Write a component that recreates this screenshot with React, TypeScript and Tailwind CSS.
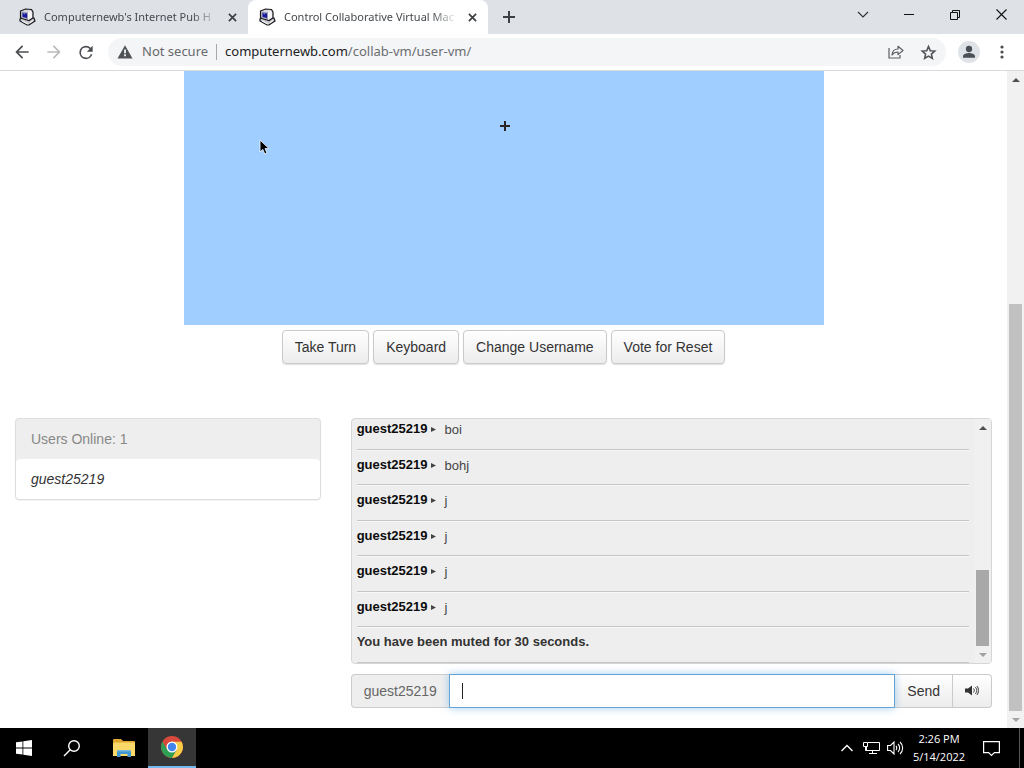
import React from "react";

function PcIcon() {
  return (
    <svg width="18" height="18" viewBox="0 0 18 18" className="shrink-0" aria-hidden="true">
      <path d="M2 11l3-2 11 1 1 3-6 4-2 0-7-4z" fill="#c9c9d0" stroke="#18181c" strokeWidth="1.200" />
      <path d="M4 13l6 3M12 15l3-2.500" stroke="#fff" strokeWidth="1" />
      <path d="M2.500 3l5-2 6 .5 1.500 2.500v6l-4 2.500-7-2-1.500-1z" fill="#d8d8df" stroke="#18181c" strokeWidth="1.200" />
      <path d="M10 4l3-1 1 3v3l-4 3z" fill="#f5f5f8" />
      <path d="M3.500 3.500l6.500 1v7l-6.500-2z" fill="#9a9cab" />
      <path d="M4.500 4.800l4.500.8v4.400l-4.500-1.200z" fill="#17179a" />
      <path d="M5.500 5.600l1.500.3" stroke="#8f9fff" />
    </svg>
  );
}

function Tab({ title, active }: { title: string; active?: boolean }) {
  return (
    <div
      className={
        active
          ? "flex w-60 items-center rounded-t-lg bg-white pr-2 pl-2.5 text-[#45494d]"
          : "flex w-60 items-center pr-2 pl-2.5 text-[#45494d]"
      }
    >
      <PcIcon />
      <span className="ml-2 min-w-0 flex-1 overflow-hidden [mask-image:linear-gradient(to_right,black_85%,transparent)] font-['Noto_Sans',sans-serif] text-[11px] whitespace-nowrap">
        {title}
      </span>
      <button type="button" aria-label="Close tab" className="ml-1.5 flex size-4 items-center justify-center">
        <svg width="9" height="9" viewBox="0 0 10 10" stroke="#3c4043" strokeWidth="1.900">
          <path d="M1 1l8 8M9 1L1 9" />
        </svg>
      </button>
    </div>
  );
}

function TabStrip() {
  return (
    <header className="flex h-[34px] shrink-0 bg-[#dee1e6] pl-2">
      <div className="flex min-w-0">
        <Tab title="Computernewb's Internet Pub H" />
        <Tab title="Control Collaborative Virtual Mac" active />
      </div>
      <button type="button" aria-label="New tab" className="ml-[11px] flex w-5 items-center justify-center">
        <svg width="12" height="12" viewBox="0 0 12 12" stroke="#3c4043" strokeWidth="2">
          <path d="M6 0v12M0 6h12" />
        </svg>
      </button>
      <div className="ml-auto flex h-[29px]">
        <button type="button" aria-label="Search tabs" className="flex w-[46px] items-center justify-center">
          <svg width="12" height="12" viewBox="0 0 12 12" fill="none" stroke="#333" strokeWidth="1.200">
            <path d="M1 3l5 5 5-5" />
          </svg>
        </button>
        <button type="button" aria-label="Minimize" className="flex w-[46px] items-center justify-center">
          <svg width="10" height="10" viewBox="0 0 10 10" stroke="#111">
            <path d="M0 4.500h10" />
          </svg>
        </button>
        <button type="button" aria-label="Restore" className="flex w-[46px] items-center justify-center">
          <svg width="10" height="10" viewBox="0 0 10 10" fill="none" stroke="#111">
            <path d="M.5 2.500h7v7h-7zM2.500 2.500v-2h7v7h-2" />
          </svg>
        </button>
        <button type="button" aria-label="Close" className="flex w-[46px] items-center justify-center">
          <svg width="11" height="11" viewBox="0 0 11 11" stroke="#111" strokeWidth="1.100">
            <path d="M.5.500l10 10M10.500.500l-10 10" />
          </svg>
        </button>
      </div>
    </header>
  );
}

function Toolbar() {
  return (
    <div className="flex h-[37px] shrink-0 items-center border-b border-[#d8dadd] bg-white pr-3 pl-3">
      <button type="button" aria-label="Back" className="flex size-5 items-center justify-center">
        <svg width="20" height="20" viewBox="0 0 24 24" fill="#4a4d51">
          <path d="M20 11H7.830l5.590-5.590L12 4l-8 8 8 8 1.410-1.410L7.830 13H20z" />
        </svg>
      </button>
      <button type="button" aria-label="Forward" className="ml-3 flex size-5 items-center justify-center">
        <svg width="20" height="20" viewBox="0 0 24 24" fill="#b9bbbd">
          <path d="M12 4l-1.410 1.410L16.170 11H4v2h12.170l-5.580 5.590L12 20l8-8z" />
        </svg>
      </button>
      <button type="button" aria-label="Reload" className="ml-3 flex size-5 items-center justify-center">
        <svg width="21" height="21" viewBox="0 0 24 24" fill="#4a4d51">
          <path d="M17.650 6.350A7.960 7.960 0 0 0 12 4a8 8 0 1 0 7.730 10h-2.080A6 6 0 1 1 12 6c1.660 0 3.140.690 4.220 1.780L13 11h7V4z" />
        </svg>
      </button>
      <div className="ml-3 flex h-7 min-w-0 flex-1 items-center rounded-full bg-[#f4f5f6] pr-2 pl-2 font-['Noto_Sans',sans-serif] text-[13px]">
        <svg width="18" height="18" viewBox="0 0 24 24" fill="#4f5256" className="shrink-0">
          <path d="M2 20.500h20L12 3zM13.200 17.500h-2.400v-2.400h2.400zM13.200 13.500h-2.400V8.700h2.400z" />
        </svg>
        <span className="ml-2 shrink-0 text-[#66696d]">Not secure</span>
        <span className="ml-2 h-4 w-px shrink-0 bg-[#a5a8ac]" />
        <span className="ml-2 flex-1 truncate text-[#202124]">
          computernewb.com<span className="text-[#6a6d71]">/collab-vm/user-vm/</span>
        </span>
        <button type="button" aria-label="Share" className="flex size-5 items-center justify-center">
          <svg width="16" height="14" viewBox="0 0 16 14" fill="none" stroke="#5b5e62" strokeWidth="1.200">
            <path d="M1 3v10h11v-3" />
            <path d="M4 10c.3-4 2.200-6 6-6V1.300L15 5.500 10 9.600V7C7.300 7 5.500 7.900 4 10z" strokeLinejoin="round" />
          </svg>
        </button>
        <button type="button" aria-label="Bookmark" className="ml-3 flex size-5 items-center justify-center">
          <svg width="17" height="17" viewBox="0 0 24 24" fill="none" stroke="#505357" strokeWidth="2.200">
            <path d="M12 3.500l2.500 5.900 6.400.6-4.800 4.200 1.400 6.300-5.500-3.300-5.500 3.300 1.400-6.300L3.100 10l6.400-.6z" />
          </svg>
        </button>
      </div>
      <button type="button" aria-label="Profile" className="ml-3 flex size-[22px] items-center justify-center rounded-full bg-[#dfe2e7]">
        <svg width="18" height="18" viewBox="0 0 24 24" fill="#4a4e55">
          <circle cx="12" cy="8" r="4.200" />
          <path d="M4 19.500v-2c0-2.800 5-4.300 8-4.300s8 1.500 8 4.300v2z" />
        </svg>
      </button>
      <button type="button" aria-label="Menu" className="ml-3 flex size-5 items-center justify-center">
        <svg width="4" height="14" viewBox="0 0 4 14" fill="#4a4d51">
          <circle cx="2" cy="2" r="1.600" />
          <circle cx="2" cy="7" r="1.600" />
          <circle cx="2" cy="12" r="1.600" />
        </svg>
      </button>
    </div>
  );
}

function Arrow({ up, fill }: { up?: boolean; fill: string }) {
  return (
    <svg width="8" height="4" viewBox="0 0 8 4" fill={fill} aria-hidden="true">
      {up ? <path d="M0 4l4-4 4 4z" /> : <path d="M0 0l4 4 4-4z" />}
    </svg>
  );
}

const buttonLook =
  "border border-[#cacaca] bg-gradient-to-b from-white to-[#ececec] text-[14px] text-[#333] hover:to-[#e0e0e0]";

const messages = [
  { user: "guest25219", text: "boi" },
  { user: "guest25219", text: "bohj" },
  { user: "guest25219", text: "j" },
  { user: "guest25219", text: "j" },
  { user: "guest25219", text: "j" },
  { user: "guest25219", text: "j" },
  { text: "You have been muted for 30 seconds." },
];

function Screen() {
  return (
    <div className="relative mx-auto h-[254px] w-full max-w-[640px] bg-[#9fceff]">
      <svg className="absolute top-[68px] left-[75px]" width="12" height="18" viewBox="0 0 12 18" aria-hidden="true">
        <path d="M1 1v12l2.800-2.600 2 4.600 2.200-1-2-4.400H10z" fill="#000" stroke="#e8f4ff" strokeWidth=".9" />
      </svg>
      <svg className="absolute top-[50px] left-[316px]" width="10" height="10" viewBox="0 0 10 10" aria-hidden="true">
        <path d="M5 0v10M0 5h10" stroke="#2b2523" strokeWidth="2" />
      </svg>
    </div>
  );
}

function Chat() {
  return (
    <section className="col-span-2 px-[15px]">
      <div className="flex h-[246px] overflow-hidden rounded border border-[#d6d6d6] bg-[#eee]">
        <div className="flex min-w-0 flex-1 flex-col justify-end overflow-hidden px-[5px]">
          <ul className="flex h-[249px] shrink-0 flex-col text-[13px] leading-[18px]">
            {messages.map((m, i) => (
              <li key={i} className="flex flex-1 items-start border-t border-b border-t-[#f8f8f8] border-b-[#c6c6c6] pt-[5px]">
                <b className={m.user ? "text-[#0b0b0b]" : "text-[#333]"}>{m.user ?? m.text}</b>
                {m.user && (
                  <>
                    <svg width="5" height="5" viewBox="0 0 5 5" fill="#444" className="mt-[7px] ml-1" aria-hidden="true">
                      <path d="M0 0l5 2.500L0 5z" />
                    </svg>
                    <span className="mt-px ml-2 text-[#444]">{m.text}</span>
                  </>
                )}
              </li>
            ))}
          </ul>
        </div>
        <div className="flex w-[17px] shrink-0 flex-col items-center bg-[#f0f0f0]">
          <div className="flex h-[17px] items-center">
            <Arrow up fill="#505050" />
          </div>
          <div className="mt-auto h-[76px] w-[13px] bg-[#a8a8a8]" />
          <div className="flex h-[17px] items-center">
            <Arrow fill="#a0a0a0" />
          </div>
        </div>
      </div>
      <form className="mt-2.5 flex h-[34px]" onSubmit={(e) => e.preventDefault()}>
        <label
          htmlFor="chat-input"
          className="flex items-center rounded-l border border-r-0 border-[#ccc] bg-[#eee] px-3 text-[14px] text-[#666]"
        >
          guest25219
        </label>
        <div className="z-10 flex min-w-0 flex-1 items-center border border-[#66a3d2] bg-white shadow-[0_0_8px_rgba(102,175,233,0.6)]">
          <span className="ml-3 h-4 w-px bg-[#222]" />
          <input id="chat-input" type="text" className="h-full min-w-0 flex-1 bg-transparent text-[14px] outline-none" />
        </div>
        <button type="submit" className={buttonLook + " border-l-0 px-3"}>
          Send
        </button>
        <button type="button" aria-label="Toggle sound" className={buttonLook + " flex w-[39px] items-center justify-center rounded-r border-l-0"}>
          <svg width="14" height="12" viewBox="0 0 14 12" aria-hidden="true">
            <path d="M0 3.500h3l4-3v10l-4-3H0z" fill="#333" />
            <path d="M8.500 3.500c1 1 1 3 0 4M10.200 2.100c2 1.700 2 5.100 0 6.800M11.800 1c2.200 2 2.200 7 0 9" fill="none" stroke="#333" />
          </svg>
        </button>
      </form>
    </section>
  );
}

function Page() {
  return (
    <div className="flex min-h-0 flex-1 bg-white font-['Liberation_Sans',Arial,sans-serif]">
      <main className="min-w-0 flex-1 overflow-hidden">
        <Screen />
        <div className="mt-[5px] flex justify-center gap-1">
          {["Take Turn", "Keyboard", "Change Username", "Vote for Reset"].map((name) => (
            <button key={name} type="button" className={buttonLook + " h-[34px] rounded px-3 shadow-[0_1px_1px_rgba(0,0,0,0.12)]"}>
              {name}
            </button>
          ))}
        </div>
        <div className="mt-[54px] grid grid-cols-3 items-start">
          <section className="px-[15px]">
            <div className="rounded border border-[#ddd] bg-[#eee] text-[14px] shadow-[0_1px_1px_rgba(0,0,0,0.05)]">
              <h2 className="flex h-10 items-center px-[15px] text-[#888]">Users Online: 1</h2>
              <div className="flex h-10 items-center rounded bg-white px-[15px] text-[#333] italic">guest25219</div>
            </div>
          </section>
          <Chat />
        </div>
      </main>
      <div className="flex w-[17px] shrink-0 flex-col items-center bg-[#f1f1f1]">
        <div className="flex h-[17px] items-center">
          <Arrow up fill="#505050" />
        </div>
        <div className="mt-auto h-[407px] w-[13px] bg-[#c1c1c1]" />
        <div className="flex h-[17px] items-center">
          <Arrow fill="#a3a3a3" />
        </div>
      </div>
    </div>
  );
}

function Taskbar() {
  return (
    <footer className="flex h-10 shrink-0 bg-black text-white">
      <button type="button" aria-label="Start" className="flex w-12 items-center justify-center">
        <svg width="16" height="16" viewBox="0 0 16 16" fill="#fff">
          <path d="M0 2.300l6.500-.9v6.200H0zM7.300 1.300L16 0v7.600H7.300zM0 8.400h6.500v6.200L0 13.700zM7.300 8.400H16V16l-8.700-1.300z" />
        </svg>
      </button>
      <button type="button" aria-label="Search" className="flex w-12 items-center justify-center">
        <svg width="18" height="18" viewBox="0 0 18 18" fill="none" stroke="#fff" strokeWidth="1.400">
          <circle cx="11" cy="7" r="5.300" />
          <path d="M7.200 10.800L1 17" />
        </svg>
      </button>
      <button type="button" aria-label="File Explorer" className="ml-1 flex w-12 items-center justify-center">
        <svg width="22" height="18" viewBox="0 0 22 18">
          <path d="M0 1q0-1 1-1h7l2 2h11q1 0 1 1v14H0z" fill="#e1a72f" />
          <path d="M1 3.500h21V17H0V4.500z" fill="#fbd968" />
          <path d="M4 18v-5q0-2 2-2h10q2 0 2 2v5h-3.500v-3h-7v3z" fill="#4197d3" />
          <path d="M4 11h14v1.500H4z" fill="#73b7df" />
        </svg>
      </button>
      <button type="button" aria-label="Chrome" className="flex w-12 items-center justify-center border-b-2 border-[#76b9ed] bg-[#363636]">
        <svg width="24" height="24" viewBox="0 0 24 24">
          <circle cx="12" cy="12" r="11" fill="#d94a3d" />
          <path d="M2.500 6.500A11 11 0 0 0 12 23l4.800-8.200-9.600 0z" fill="#2e9e55" />
          <path d="M12 23A11 11 0 0 0 21.600 6.700H12l4.800 8.100z" fill="#f7cd45" />
          <circle cx="12" cy="12" r="5.500" fill="#fff" />
          <circle cx="12" cy="12" r="4.200" fill="#4285ec" />
        </svg>
      </button>
      <div className="ml-auto flex items-center">
        <button type="button" aria-label="Show hidden icons" className="flex w-6 items-center justify-center">
          <svg width="12" height="8" viewBox="0 0 12 8" fill="none" stroke="#fff" strokeWidth="1.400">
            <path d="M.5 7L6 1.500 11.500 7" />
          </svg>
        </button>
        <button type="button" aria-label="Network" className="flex w-6 items-center justify-center">
          <svg width="17" height="14" viewBox="0 0 17 14" fill="none" stroke="#fff">
            <path d="M5 1.500h11.500v8h-13v-4M9.500 9.500v3M6 12.500h8M.5 1.500h4v4h-4zM2.500 5.500v4h2" />
          </svg>
        </button>
        <button type="button" aria-label="Volume" className="flex w-6 items-center justify-center">
          <svg width="17" height="14" viewBox="0 0 17 14" fill="none" stroke="#fff" strokeWidth="1.100">
            <path d="M.6 4.500h2.900L7 1v12L3.500 9.500H.6zM9 5c1 1 1 3 0 4M11 3c2.200 2 2.200 6 0 8M13 1c3.500 3 3.500 9 0 12" />
          </svg>
        </button>
        <div className="flex w-16 flex-col items-center text-[11px] leading-[18px]">
          <time>2:26 PM</time>
          <time>5/14/2022</time>
        </div>
        <button type="button" aria-label="Notifications" className="flex w-10 items-center justify-center">
          <svg width="17" height="17" viewBox="0 0 17 17" fill="none" stroke="#fff" strokeWidth="1.200">
            <path d="M.6 1.600h15.800v11h-5L8.500 15.500l-2.900-2.900h-5z" />
          </svg>
        </button>
        <div className="ml-2 h-full w-[5px] border-l border-[#555]" />
      </div>
    </footer>
  );
}

export default function App() {
  return (
    <div className="flex h-screen flex-col overflow-hidden font-['Open_Sans','Noto_Sans',sans-serif]">
      <TabStrip />
      <Toolbar />
      <Page />
      <Taskbar />
    </div>
  );
}
